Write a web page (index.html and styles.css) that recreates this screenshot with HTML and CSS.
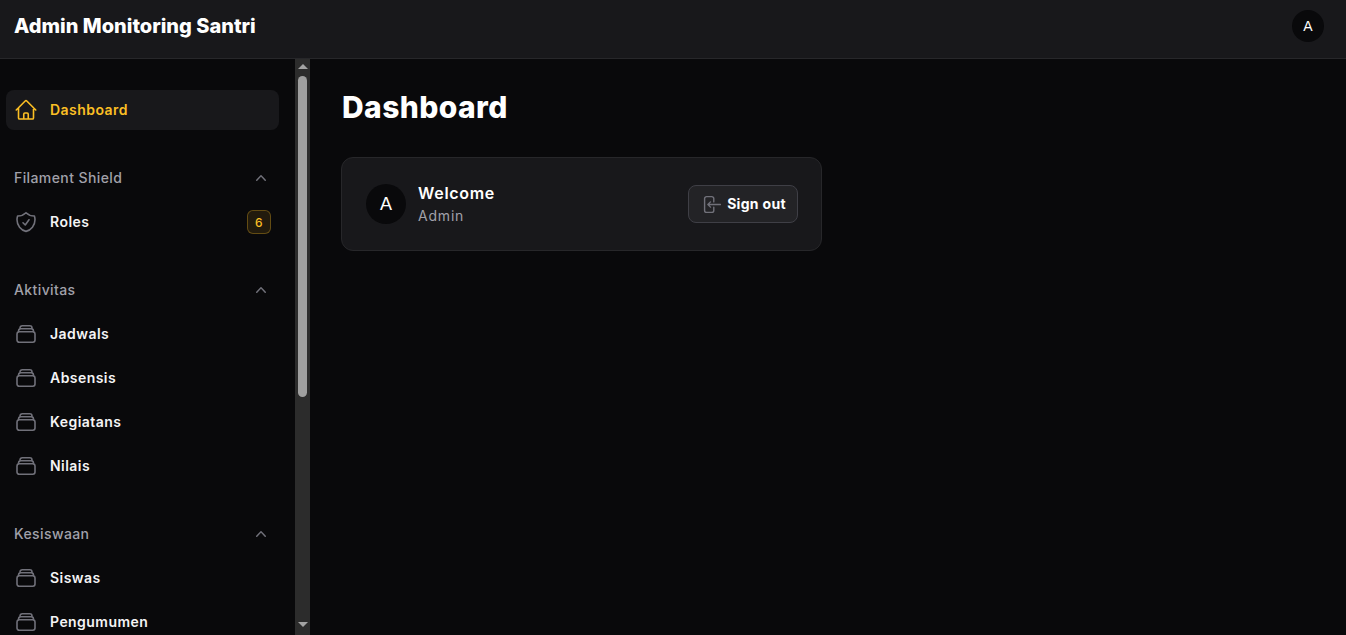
FILE: index.html
```html
<!DOCTYPE html>
<html lang="en">
<head>
  <meta charset="UTF-8" />
  <meta name="viewport" content="width=device-width, initial-scale=1.0"/>
  <title>Dashboard - Admin Monitoring Santri</title>
  <link rel="stylesheet" href="styles.css">
</head>
<body>
  <!-- Icon sprite -->
  <svg class="sprite" xmlns="http://www.w3.org/2000/svg">
    <symbol id="i-home" viewBox="0 0 24 24"><path d="M2.25 12l8.954-8.955c.44-.439 1.152-.439 1.591 0L21.75 12M4.5 9.75v10.125c0 .621.504 1.125 1.125 1.125H9.75v-4.875c0-.621.504-1.125 1.125-1.125h2.25c.621 0 1.125.504 1.125 1.125V21h4.125c.621 0 1.125-.504 1.125-1.125V9.75M8.25 21h8.25"/></symbol>
    <symbol id="i-shield" viewBox="0 0 24 24"><path d="M9 12.75L11.25 15 15 9.75m-3-7.036A11.959 11.959 0 013.598 6 11.99 11.99 0 003 9.749c0 5.592 3.824 10.29 9 11.623 5.176-1.332 9-6.03 9-11.622 0-1.31-.21-2.571-.598-3.751h-.152c-3.196 0-6.1-1.248-8.25-3.285z"/></symbol>
    <symbol id="i-stack" viewBox="0 0 24 24"><path d="M6 6.878V6a2.25 2.25 0 012.25-2.25h7.5A2.25 2.25 0 0118 6v.878m-12 0c.235-.083.487-.128.75-.128h10.5c.263 0 .515.045.75.128m-12 0A2.25 2.25 0 004.5 9v.878m13.5-3A2.25 2.25 0 0119.5 9v.878m0 0a2.246 2.246 0 00-.75-.128H5.25c-.263 0-.515.045-.75.128m15 0A2.25 2.25 0 0121 12v6a2.25 2.25 0 01-2.25 2.25H5.25A2.25 2.25 0 013 18v-6c0-.98.626-1.813 1.5-2.122"/></symbol>
    <symbol id="i-chevron" viewBox="0 0 20 20"><path class="solid" d="M14.77 12.79a.75.75 0 01-1.06-.02L10 8.832 6.29 12.77a.75.75 0 11-1.08-1.04l4.25-4.5a.75.75 0 011.08 0l4.25 4.5a.75.75 0 01-.02 1.06z"/></symbol>
    <symbol id="i-signout" viewBox="0 0 24 24"><path d="M15.75 9V5.25A2.25 2.25 0 0013.5 3h-6a2.25 2.25 0 00-2.25 2.25v13.5A2.25 2.25 0 007.5 21h6a2.25 2.25 0 002.25-2.25V15M12 9l-3 3m0 0l3 3m-3-3h14.5"/></symbol>
  </svg>

  <header class="topbar">
    <a class="brand" href="#">Admin Monitoring Santri</a>
    <div class="avatar avatar-small">A</div>
  </header>

  <div class="layout">
    <aside class="sidebar">
      <nav class="nav">
        <ul class="nav-group">
          <li>
            <a class="nav-item active" href="#">
              <svg class="icon"><use href="#i-home"/></svg>
              <span class="nav-text">Dashboard</span>
            </a>
          </li>
        </ul>

        <ul class="nav-group">
          <li class="nav-label">
            <span class="nav-text">Filament Shield</span>
            <svg class="chevron"><use href="#i-chevron"/></svg>
          </li>
          <li>
            <a class="nav-item" href="#">
              <svg class="icon"><use href="#i-shield"/></svg>
              <span class="nav-text">Roles</span>
              <span class="badge">6</span>
            </a>
          </li>
        </ul>

        <ul class="nav-group">
          <li class="nav-label">
            <span class="nav-text">Aktivitas</span>
            <svg class="chevron"><use href="#i-chevron"/></svg>
          </li>
          <li><a class="nav-item" href="#"><svg class="icon"><use href="#i-stack"/></svg><span class="nav-text">Jadwals</span></a></li>
          <li><a class="nav-item" href="#"><svg class="icon"><use href="#i-stack"/></svg><span class="nav-text">Absensis</span></a></li>
          <li><a class="nav-item" href="#"><svg class="icon"><use href="#i-stack"/></svg><span class="nav-text">Kegiatans</span></a></li>
          <li><a class="nav-item" href="#"><svg class="icon"><use href="#i-stack"/></svg><span class="nav-text">Nilais</span></a></li>
        </ul>

        <ul class="nav-group">
          <li class="nav-label">
            <span class="nav-text">Kesiswaan</span>
            <svg class="chevron"><use href="#i-chevron"/></svg>
          </li>
          <li><a class="nav-item" href="#"><svg class="icon"><use href="#i-stack"/></svg><span class="nav-text">Siswas</span></a></li>
          <li><a class="nav-item" href="#"><svg class="icon"><use href="#i-stack"/></svg><span class="nav-text">Pengumumen</span></a></li>
        </ul>
      </nav>

      <!-- Scrollbar of the sidebar -->
      <div class="scrollbar">
        <span class="arrow-up"></span>
        <span class="thumb"></span>
        <span class="arrow-down"></span>
      </div>
    </aside>

    <main class="content">
      <h1>Dashboard</h1>

      <section class="card">
        <div class="avatar">A</div>
        <div class="card-text">
          <h2>Welcome</h2>
          <p>Admin</p>
        </div>
        <button class="signout" type="button">
          <svg class="icon-small"><use href="#i-signout"/></svg>
          <span>Sign out</span>
        </button>
      </section>
    </main>
  </div>
</body>
</html>
```

FILE: styles.css
```css
* {
  box-sizing: border-box;
  margin: 0;
  padding: 0;
}

body {
  font-family: Inter, 'Open Sans', sans-serif;
  background-color: #09090b;
  color: #fff;
  height: 100vh;
  overflow: hidden;
  display: flex;
  flex-direction: column;
}

a {
  color: inherit;
  text-decoration: none;
}

ul {
  list-style: none;
}

.sprite {
  display: none;
}

svg {
  fill: none;
  stroke: currentColor;
  stroke-width: 1.6;
  stroke-linecap: round;
  stroke-linejoin: round;
  flex-shrink: 0;
}

/* Top bar */
.topbar {
  height: 59px;
  flex-shrink: 0;
  display: flex;
  justify-content: space-between;
  align-items: center;
  padding: 0 22px 6px 14px;
  background-color: #18181b;
  border-bottom: 1px solid #27272a;
}

.brand {
  font-size: 20px;
  font-weight: 800;
}

.avatar {
  width: 40px;
  height: 40px;
  border-radius: 50%;
  background-color: #09090b;
  display: flex;
  justify-content: center;
  align-items: center;
  flex-shrink: 0;
  font-family: 'Liberation Sans', sans-serif;
  font-size: 18px;
}

.avatar-small {
  width: 32px;
  height: 32px;
  font-size: 14px;
}

/* Layout */
.layout {
  flex: 1;
  display: flex;
  min-height: 0;
}

.sidebar {
  width: 310px;
  flex-shrink: 0;
  display: flex;
  overflow: hidden;
}

.nav {
  width: 295px;
  flex-shrink: 0;
  display: flex;
  flex-direction: column;
  gap: 28px;
  padding: 31px 16px 0 6px;
}

.nav-group {
  display: flex;
  flex-direction: column;
  gap: 4px;
}

.nav-label {
  height: 40px;
  display: flex;
  justify-content: space-between;
  align-items: center;
  padding: 0 8px;
  font-size: 14px;
  font-weight: 500;
  letter-spacing: 0.4px;
  color: #a1a1aa;
}

.nav-text {
  margin-bottom: 2px;
}

.chevron {
  width: 20px;
  height: 20px;
  color: #71717a;
}

.solid {
  fill: currentColor;
  stroke: none;
}

.nav-item {
  height: 40px;
  display: flex;
  align-items: center;
  gap: 12px;
  padding: 0 8px;
  border-radius: 8px;
  font-size: 14px;
  font-weight: 600;
  letter-spacing: 0.45px;
  color: #f4f4f5;
}

.nav-item .icon {
  width: 24px;
  height: 24px;
  color: #71717a;
}

.nav-item.active {
  background-color: #18181b;
  color: #fbbf24;
}

.nav-item.active .icon {
  color: #fbbf24;
}

.badge {
  margin-left: auto;
  width: 24px;
  height: 24px;
  display: flex;
  justify-content: center;
  align-items: center;
  border: 1px solid rgba(251, 191, 36, 0.3);
  border-radius: 6px;
  background-color: rgba(251, 191, 36, 0.1);
  color: #fbbf24;
  font-size: 12px;
  font-weight: 500;
}

.scrollbar {
  width: 15px;
  flex-shrink: 0;
  display: flex;
  flex-direction: column;
  align-items: center;
  padding: 5px 0 8px;
  background-color: #2c2c2c;
}

.arrow-up,
.arrow-down {
  width: 0;
  height: 0;
  border-left: 5px solid transparent;
  border-right: 5px solid transparent;
}

.arrow-up {
  border-bottom: 5px solid #a3a3a3;
}

.arrow-down {
  margin-top: auto;
  border-top: 5px solid #a3a3a3;
}

.thumb {
  width: 9px;
  height: 321px;
  margin-top: 7px;
  border-radius: 5px;
  background-color: #9f9f9f;
}

/* Main content */
.content {
  flex: 1;
  padding: 28px 31px;
}

.content h1 {
  font-size: 30px;
  font-weight: 800;
  line-height: 40px;
  letter-spacing: 0.4px;
  padding-left: 1px;
  margin-bottom: 30px;
}

.card {
  width: 481px;
  height: 94px;
  display: flex;
  align-items: center;
  gap: 12px;
  padding: 0 23px 0 24px;
  background-color: #18181b;
  border: 1px solid #27272a;
  border-radius: 12px;
}

.card-text {
  flex: 1;
  margin-bottom: 1px;
}

.card-text h2 {
  font-size: 16px;
  font-weight: 600;
  line-height: 23px;
  letter-spacing: 0.7px;
}

.card-text p {
  font-size: 14px;
  line-height: 21px;
  letter-spacing: 0.8px;
  color: #a1a1aa;
}

.signout {
  width: 110px;
  height: 38px;
  display: flex;
  justify-content: center;
  align-items: center;
  gap: 6px;
  background-color: #232326;
  border: 1px solid #3f3f46;
  border-radius: 8px;
  color: #fff;
  font-family: inherit;
  font-size: 14px;
  font-weight: 700;
  letter-spacing: 0.3px;
  cursor: pointer;
}

.signout span {
  margin-bottom: 2px;
}

.icon-small {
  width: 21px;
  height: 21px;
  color: #71717a;
}
```
